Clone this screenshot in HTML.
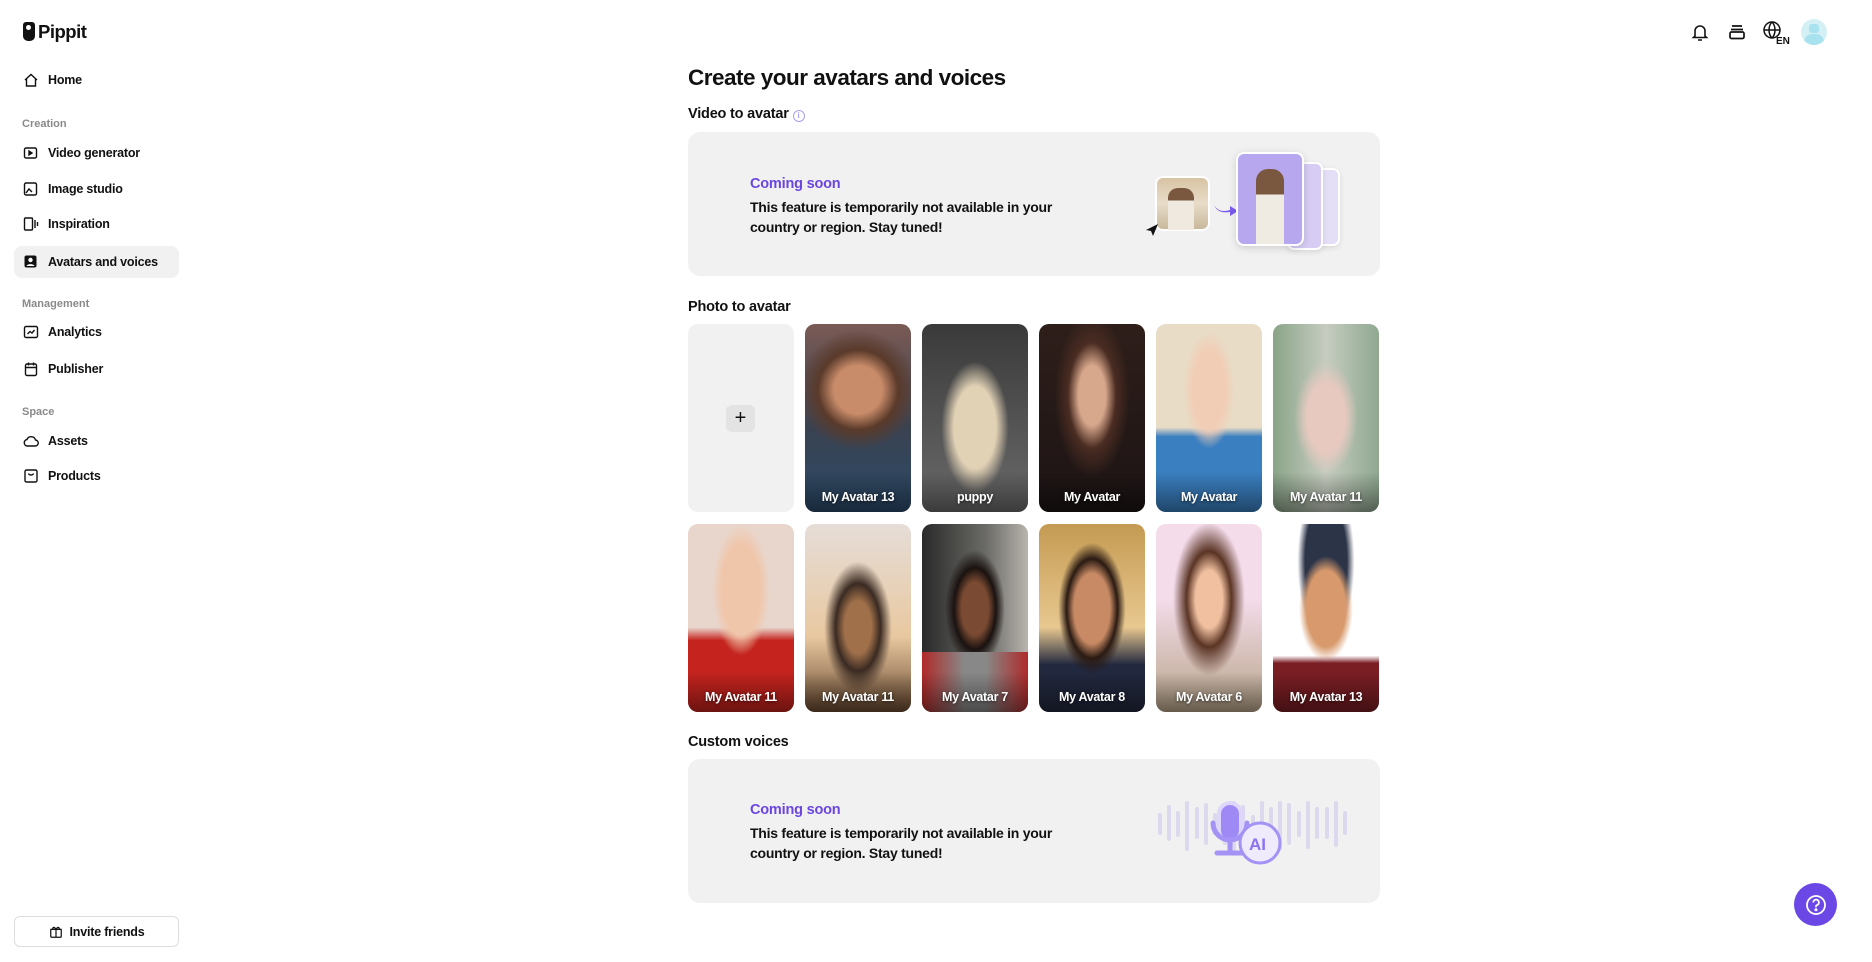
<!DOCTYPE html>
<html><head><meta charset="utf-8"><style>
*{box-sizing:border-box;margin:0;padding:0}
body{width:1872px;height:962px;background:#fff;font-family:"Liberation Sans",Arial,sans-serif;color:#111;position:relative;overflow:hidden}
.abs{position:absolute}
.nav{position:absolute;left:14px;width:165px;height:32px;display:flex;align-items:center;padding-left:9px;font-size:12.5px;font-weight:bold;border-radius:8px;letter-spacing:-0.2px}
.nav svg{margin-right:9px}
.sec{position:absolute;left:22px;font-size:11px;color:#8a8a8a;font-weight:bold}
.card{position:absolute;width:106px;height:188px;border-radius:10px;overflow:hidden}
.card span{position:absolute;left:0;right:0;bottom:8px;text-align:center;color:#fff;font-weight:bold;font-size:12.5px;letter-spacing:-0.3px;text-shadow:0 1px 3px rgba(0,0,0,.6);z-index:2}
.card.p:after{content:"";position:absolute;left:0;right:0;bottom:0;height:40px;background:linear-gradient(transparent,rgba(0,0,0,.45))}
.h2{position:absolute;left:688px;font-size:14.5px;font-weight:bold;letter-spacing:-0.2px}
.panel{position:absolute;left:688px;width:692px;height:144px;background:#f1f1f1;border-radius:12px}
.cs{position:absolute;left:62px;color:#6a45e0;font-size:14.5px;font-weight:bold;letter-spacing:-0.2px}
.msg{position:absolute;left:62px;font-size:14px;font-weight:bold;line-height:20px;width:340px;letter-spacing:-0.25px}
</style></head><body>
<div class="abs" style="left:23px;top:22px;width:12px;height:19px;background:#111;border-radius:3px 3px 5px 5px"></div>
<div class="abs" style="left:26px;top:25px;width:5px;height:5px;background:#fff;border-radius:50%"></div>
<div class="abs" style="left:38px;top:21px;font-size:18.5px;font-weight:bold;letter-spacing:-0.5px">Pippit</div>

<div class="nav" style="top:64px"><svg width="16" height="16" viewBox="0 0 16 16" fill="none" stroke="#111" stroke-width="1.4"><path d="M2 8 8 2.5 14 8M3.5 6.7V14h9V6.7"/></svg>Home</div>
<div class="sec" style="top:118px">Creation</div>
<div class="nav" style="top:137px"><svg width="16" height="16" viewBox="0 0 16 16" fill="none" stroke="#111" stroke-width="1.4"><rect x="1.5" y="3" width="12" height="10" rx="1.5"/><path d="M6 6v4l3-2z" fill="#111"/></svg>Video generator</div>
<div class="nav" style="top:173px"><svg width="16" height="16" viewBox="0 0 16 16" fill="none" stroke="#111" stroke-width="1.4"><rect x="1.5" y="2" width="12" height="12" rx="1.5"/><path d="M3 12l3-4 3 3"/></svg>Image studio</div>
<div class="nav" style="top:208px"><svg width="16" height="16" viewBox="0 0 16 16" fill="none" stroke="#111" stroke-width="1.4"><rect x="1.5" y="2" width="8" height="12" rx="1"/><path d="M12 4v8M14.5 6v4"/></svg>Inspiration</div>
<div class="nav" style="top:246px;background:#f1f1f1"><svg width="16" height="16" viewBox="0 0 16 16"><rect x="1.5" y="1.5" width="12" height="12" rx="2" fill="#111"/><circle cx="7.5" cy="6" r="2.2" fill="#fff"/><path d="M3.5 12c1-2.5 7-2.5 8 0" fill="#fff"/></svg>Avatars and voices</div>
<div class="sec" style="top:298px">Management</div>
<div class="nav" style="top:316px"><svg width="16" height="16" viewBox="0 0 16 16" fill="none" stroke="#111" stroke-width="1.4"><rect x="1.5" y="2.5" width="13" height="11" rx="1.5"/><path d="M4.5 10l2.5-2.5 2 1.5 2.5-3"/></svg>Analytics</div>
<div class="nav" style="top:353px"><svg width="16" height="16" viewBox="0 0 16 16" fill="none" stroke="#111" stroke-width="1.4"><rect x="2.5" y="3" width="11" height="11.5" rx="1.5"/><path d="M2.5 6.5h11M5.5 1.5v3M10.5 1.5v3"/></svg>Publisher</div>
<div class="sec" style="top:406px">Space</div>
<div class="nav" style="top:425px"><svg width="16" height="16" viewBox="0 0 16 16" fill="none" stroke="#111" stroke-width="1.4"><path d="M4 13h8a3 3 0 0 0 .5-6A4.5 4.5 0 0 0 4 6.5 3.3 3.3 0 0 0 4 13z"/></svg>Assets</div>
<div class="nav" style="top:460px"><svg width="16" height="16" viewBox="0 0 16 16" fill="none" stroke="#111" stroke-width="1.4"><rect x="2" y="2" width="12" height="12" rx="1.5"/><path d="M5.5 5.5c.5 2 4.5 2 5 0"/></svg>Products</div>

<div class="abs" style="left:14px;top:916px;width:165px;height:31px;border:1px solid #ddd;border-radius:6px;display:flex;align-items:center;justify-content:center;font-size:12.5px;font-weight:bold;letter-spacing:-0.2px"><svg width="14" height="14" viewBox="0 0 16 16" fill="none" stroke="#111" stroke-width="1.4" style="margin-right:7px"><rect x="2" y="5" width="12" height="9" rx="1"/><path d="M1.5 5h13M8 5v9M8 5C6 1 3 3 5 5M8 5c2-4 5-2 3 0"/></svg>Invite friends</div>

<svg class="abs" style="left:1690px;top:22px" width="20" height="20" viewBox="0 0 20 20" fill="none" stroke="#111" stroke-width="1.6"><path d="M5 14V9a5 5 0 0 1 10 0v5l1.5 1.5h-13zM8 18h4"/></svg>
<svg class="abs" style="left:1727px;top:22px" width="20" height="20" viewBox="0 0 20 20" fill="none" stroke="#111" stroke-width="1.7"><path d="M5 4h10M4 7.5h12"/><rect x="3" y="10" width="14" height="6.5" rx="1.5"/></svg>
<svg class="abs" style="left:1762px;top:20px" width="30" height="26" viewBox="0 0 30 26" fill="none" stroke="#111" stroke-width="1.5"><circle cx="10" cy="10" r="8"/><path d="M2 10h16M10 2c-4 4-4 12 0 16M10 2c4 4 4 12 0 16"/><text x="14" y="24" font-size="10" font-weight="bold" fill="#111" stroke="none" font-family="Liberation Sans">EN</text></svg>
<div class="abs" style="left:1801px;top:19px;width:26px;height:26px;border-radius:50%;background:#d5f0f5;overflow:hidden"><div style="position:absolute;left:8px;top:5px;width:10px;height:9px;background:#a8e2ee;border-radius:3px"></div><div style="position:absolute;left:3px;top:15px;width:20px;height:14px;background:#a8e2ee;border-radius:8px 8px 0 0"></div></div>

<div class="abs" style="left:688px;top:65px;font-size:22.5px;font-weight:bold;letter-spacing:-0.5px">Create your avatars and voices</div>
<div class="h2" style="top:106px">Video to avatar <span style="display:inline-block;width:12px;height:12px;border:1px solid #a9a0f0;border-radius:50%;font-size:8px;color:#a9a0f0;text-align:center;line-height:10px;vertical-align:0">i</span></div>
<div class="panel" style="top:132px">
 <div class="cs" style="top:44px">Coming soon</div>
 <div class="msg" style="top:65px">This feature is temporarily not available in your country or region. Stay tuned!</div>
 <div class="abs" style="left:467px;top:44px;width:55px;height:55px;border-radius:8px;background:linear-gradient(#d8c4a4,#e8dcc8 50%,#c8b89c);border:2px solid #fff"></div>
 <div class="abs" style="left:480px;top:56px;width:26px;height:42px;background:linear-gradient(#7a5840 30%,#efe9df 30%);border-radius:10px 10px 0 0"></div>
 <svg class="abs" style="left:456px;top:90px" width="16" height="16"><path d="M2 8 14 2 9 14 7 9z" fill="#111"/></svg>
 <svg class="abs" style="left:525px;top:70px" width="26" height="16"><path d="M1 3c5 8 12 6 16 5V4l8 5-8 5v-4C10 11 4 10 1 3z" fill="#7b5cf0"/></svg>
 <div class="abs" style="left:619px;top:36px;width:33px;height:78px;border-radius:7px;background:#e4def7;border:2px solid #fff;box-shadow:0 2px 6px rgba(0,0,0,.1)"></div>
 <div class="abs" style="left:599px;top:30px;width:36px;height:88px;border-radius:7px;background:#d6ccf4;border:2px solid #fff;box-shadow:0 2px 6px rgba(0,0,0,.1)"></div>
 <div class="abs" style="left:548px;top:20px;width:68px;height:94px;border-radius:8px;background:#b7a7ef;border:2px solid #fff;box-shadow:0 2px 8px rgba(0,0,0,.15);overflow:hidden"><div style="position:absolute;left:18px;top:15px;width:28px;height:80px;background:linear-gradient(#7a5840 32%,#f0ebe2 32%);border-radius:12px 12px 0 0"></div></div>
</div>

<div class="h2" style="top:299px">Photo to avatar</div>
<div class="card" style="left:688px;top:324px;background:#f1f1f1"><div style="position:absolute;left:38px;top:81px;width:29px;height:27px;background:#e3e3e3;border-radius:6px;text-align:center;font-size:20px;line-height:26px">+</div></div>
<div class="card p" style="left:805px;top:324px;background:radial-gradient(circle at 50% 35%,#c98c6a 0 18%,#5a3a2a 30%,transparent 45%),linear-gradient(#7a5a55,#3a4250 55%,#2b4a6a)"><span>My Avatar 13</span></div>
<div class="card p" style="left:922px;top:324px;background:radial-gradient(ellipse at 50% 55%,#e2d2b5 0 28%,transparent 45%),linear-gradient(#3a3a3a,#6a6a6a)"><span>puppy</span></div>
<div class="card p" style="left:1039px;top:324px;background:radial-gradient(ellipse at 50% 38%,#d8a88c 0 18%,#4a2c22 32%,transparent 50%),linear-gradient(#2e1e1a,#1c1414)"><span>My Avatar</span></div>
<div class="card p" style="left:1156px;top:324px;background:radial-gradient(ellipse at 50% 35%,#f2cdb6 0 22%,transparent 34%),linear-gradient(#e8dcc6 55%,#3a7fc0 60%)"><span>My Avatar</span></div>
<div class="card p" style="left:1273px;top:324px;background:radial-gradient(ellipse at 50% 50%,#e8c9c0 0 25%,transparent 42%),linear-gradient(90deg,#8aa488,#c6ccc0,#8fa890)"><span>My Avatar 11</span></div>

<div class="card p" style="left:688px;top:524px;background:radial-gradient(ellipse at 50% 35%,#f0c6aa 0 26%,transparent 38%),linear-gradient(#e8d6cc 55%,#c4231e 62%)"><span>My Avatar 11</span></div>
<div class="card p" style="left:805px;top:524px;background:radial-gradient(ellipse at 50% 55%,#a0704a 0 18%,#3a2a22 30%,transparent 45%),linear-gradient(#e6ddd8,#e8c8a0 60%,#6a4a30)"><span>My Avatar 11</span></div>
<div class="card p" style="left:922px;top:524px;background:radial-gradient(ellipse at 50% 45%,#7a4a32 0 18%,#1a1210 28%,transparent 40%),linear-gradient(90deg,#2a2a2a,#6a6a66 60%,#b8b4ae)"><div style="position:absolute;left:0;right:0;bottom:0;height:60px;background:linear-gradient(90deg,#b02a2a,#888 40%,#888 60%,#b02a2a)"></div><span>My Avatar 7</span></div>
<div class="card p" style="left:1039px;top:524px;background:radial-gradient(ellipse at 50% 45%,#c88a64 0 24%,#2a1a12 34%,transparent 45%),linear-gradient(#c49a52,#e8c890 55%,#22283e 75%)"><span>My Avatar 8</span></div>
<div class="card p" style="left:1156px;top:524px;background:radial-gradient(ellipse at 50% 40%,#f0c0a0 0 18%,#5a3424 30%,transparent 48%),linear-gradient(#f4dcea 40%,#b8a58a)"><span>My Avatar 6</span></div>
<div class="card p" style="left:1273px;top:524px;background:radial-gradient(ellipse at 50% 45%,#d89a6c 0 26%,transparent 36%),radial-gradient(ellipse at 50% 20%,#2c3448 0 28%,transparent 38%),linear-gradient(#fff 70%,#7a1e24 74%)"><span>My Avatar 13</span></div>

<div class="h2" style="top:734px">Custom voices</div>
<div class="panel" style="top:759px">
 <div class="cs" style="top:43px">Coming soon</div>
 <div class="msg" style="top:64px">This feature is temporarily not available in your country or region. Stay tuned!</div>
 <svg class="abs" style="left:467px;top:40px" width="200" height="80" viewBox="0 0 200 80">
  <g stroke="#dcd8ee" stroke-width="4" stroke-linecap="round">
   <path d="M5 16v18M14 8v32M23 14v22M32 4v46M42 10v28M51 6v38M60 16v18M70 6v38M79 4v46M88 8v32M98 18v14M107 4v42M116 10v28M125 4v46M134 6v38M144 14v22M153 4v44M162 10v28M172 10v28M181 4v42M190 14v20"/>
  </g>
  <rect x="64" y="4" width="22" height="38" rx="11" fill="#9f8af5" stroke="#ded6fb" stroke-width="4"/>
  <path d="M58 24a17 17 0 0 0 34 0M75 42v10M62 54h26" fill="none" stroke="#a592f5" stroke-width="5" stroke-linecap="round"/>
  <circle cx="105" cy="44" r="20" fill="#efebfd" stroke="#a592f5" stroke-width="3"/>
  <text x="94" y="51" font-size="17" font-weight="bold" fill="#8a72f0" font-family="Liberation Sans">AI</text>
 </svg>
</div>

<div class="abs" style="left:1794px;top:883px;width:43px;height:43px;border-radius:50%;background:#6b48e6;display:flex;align-items:center;justify-content:center"><svg width="22" height="22" viewBox="0 0 22 22" fill="none" stroke="#fff" stroke-width="1.8"><circle cx="11" cy="11" r="9"/><path d="M8.3 8.5a2.8 2.8 0 1 1 3.6 2.6c-.6.3-.9.8-.9 1.5v.6"/><circle cx="11" cy="15.8" r=".6" fill="#fff"/></svg></div>
</body></html>
